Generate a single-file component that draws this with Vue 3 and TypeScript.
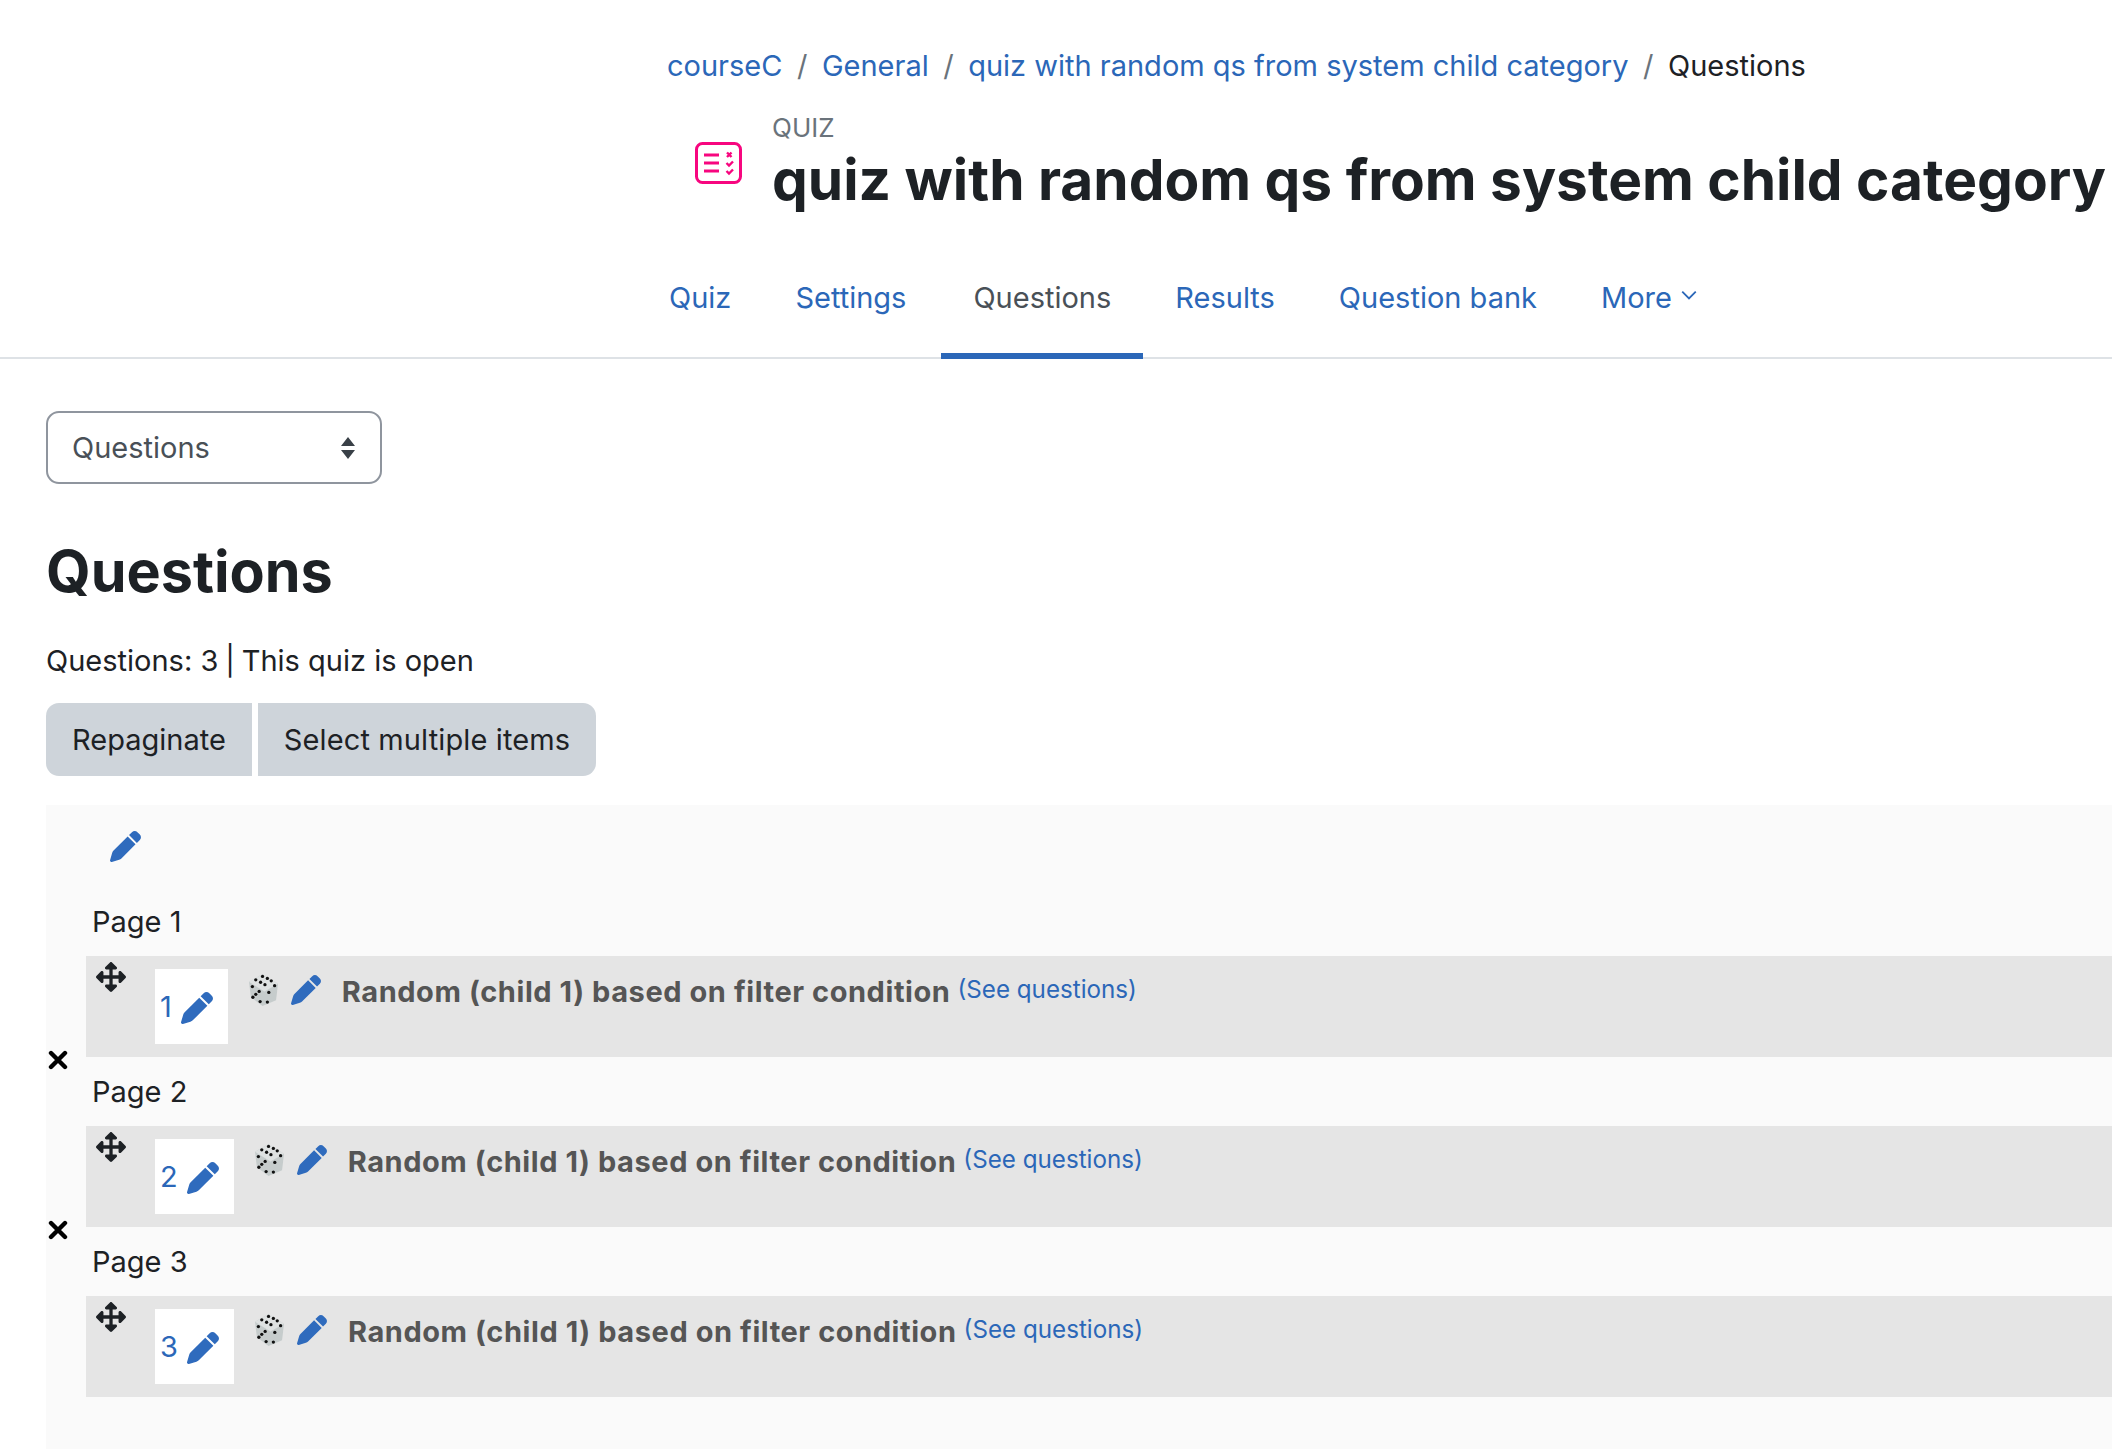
<script setup lang="ts">
const pen = 'M362.7 19.3L314.3 67.7 444.3 197.7l48.4-48.4c25-25 25-65.5 0-90.5L453.3 19.3c-25-25-65.5-25-90.5 0zm-71 71L58.6 323.5c-10.4 10.4-18 23.3-22.2 37.4L1 481.2C-1.5 489.7 .8 498.8 7 505s15.3 8.5 23.7 6.1l120.3-35.4c14.1-4.2 27-11.8 37.4-22.2L421.7 220.3 291.7 90.3z'
const move = 'M352.201 425.775l-79.196 79.196c-9.373 9.373-24.568 9.373-33.941 0l-79.196-79.196c-15.119-15.119-4.411-40.971 16.971-40.97h51.162L228 284H127.196v51.162c0 21.382-25.851 32.09-40.971 16.971L7.029 272.937c-9.373-9.373-9.373-24.569 0-33.941L86.225 159.8c15.119-15.119 40.971-4.411 40.971 16.971V228H228V127.196h-51.23c-21.382 0-32.09-25.851-16.971-40.971l79.196-79.196c9.373-9.373 24.568-9.373 33.941 0l79.196 79.196c15.119 15.119 4.411 40.971-16.971 40.971h-51.162V228h100.804v-51.162c0-21.382 25.851-32.09 40.97-16.971l79.196 79.196c9.373 9.373 9.373 24.569 0 33.941L425.773 352.2c-15.119 15.119-40.971 4.411-40.97-16.971V284H284v100.804h51.23c21.382 0 32.09 25.851 16.971 40.971z'
const crumbs = ['courseC', 'General', 'quiz with random qs from system child category']
const tabs = ['Quiz', 'Settings', 'Questions', 'Results', 'Question bank']
const slots = [1, 2, 3]
const dieDots: [number, number][] = [
  [14, 2.5], [19, 4.5], [23, 7], [7, 6], [12, 8.5], [16.5, 11],
  [3.5, 13], [10.5, 18], [4, 24], [11.5, 28.5], [7, 21],
  [26.5, 12], [20.5, 19], [19, 29],
]
</script>

<template>
  <div class="page">
    <header class="head">
      <nav class="crumbs">
        <template v-for="c in crumbs" :key="c">
          <a class="link">{{ c }}</a><span class="sep">/</span>
        </template>
        <span>Questions</span>
      </nav>
      <div class="title-row">
        <svg class="quiz-icon" viewBox="0 0 47 42" fill="none" stroke="#f7067f">
          <rect x="1.500" y="1.500" width="44" height="39" rx="6" stroke-width="3" />
          <path d="M9 13h15M9 21h15M9 29h15" stroke-width="3" />
          <path d="M32 10.500l4.500 4.500M36.500 10.500l-4.500 4.500" stroke-width="2.400" />
          <path d="M31.500 21l2.500 2.500 4-4M31.500 29l2.500 2.500 4-4" stroke-width="2.400" />
        </svg>
        <div class="title-text">
          <div class="eyebrow">QUIZ</div>
          <h1>quiz with random qs from system child category</h1>
        </div>
      </div>
      <div class="tabs">
        <a v-for="t in tabs" :key="t" class="tab" :class="{ active: t === 'Questions' }">{{ t }}</a>
        <a class="tab more">More
          <svg viewBox="0 0 16 16" class="caret" fill="none" stroke="currentColor" stroke-width="1.6"><path d="M2 5l6 6 6-6" /></svg>
        </a>
      </div>
    </header>

    <main class="main">
      <div class="select">
        <span>Questions</span>
        <svg class="updown" viewBox="0 0 16 24" fill="#394047"><path d="M8 1l7 9H1zM8 23l-7-9h14z" /></svg>
      </div>
      <h2>Questions</h2>
      <p class="status">Questions: 3 <span class="bar">|</span> This quiz is open</p>
      <div class="buttons">
        <button class="btn first">Repaginate</button>
        <button class="btn last">Select multiple items</button>
      </div>

      <section class="panel">
        <svg class="pen top-pen" viewBox="0 0 512 512"><path :d="pen" /></svg>
        <div v-for="n in slots" :key="n" class="slot">
          <div class="page-label">Page {{ n }}</div>
          <div class="row">
            <svg class="move" viewBox="0 0 512 512"><path :d="move" /></svg>
            <div class="num">
              <a class="link">{{ n }}</a>
              <svg class="pen" viewBox="0 0 512 512"><path :d="pen" /></svg>
            </div>
            <svg class="die" viewBox="0 0 30 33">
              <path d="M14 0l16 10-2 17-14 6-12-9L0 8z" fill="#c6cccc" />
              <path d="M14 0l16 10-14 8L0 8z" fill="#dfe2e2" />
              <circle v-for="(d, i) in dieDots" :key="i" :cx="d[0]" :cy="d[1]" r="1.700" fill="#111" />
            </svg>
            <svg class="pen inline-pen" viewBox="0 0 512 512"><path :d="pen" /></svg>
            <span class="q-title">Random (child 1) based on filter condition</span>
            <a class="link see">(See questions)</a>
          </div>
          <svg v-if="n < 3" class="close" viewBox="0 0 20 20" stroke="#000" stroke-width="4.400" stroke-linecap="round"><path d="M3 3l14 14M17 3L3 17" /></svg>
        </div>
      </section>
    </main>
  </div>
</template>

<style>
html, body { margin: 0; background: #fff; }
</style>

<style scoped>
.page {
  width: 2112px;
  height: 1456px;
  overflow: hidden;
  font-family: Inter, "Liberation Sans", sans-serif;
  font-size: 29px;
  line-height: 45px;
  color: #1d2125;
  background: #fff;
}
.link { color: #2b67b8; }
.crumbs {
  display: flex;
  padding: 43px 0 0 667px;
  height: 45px;
}
.sep { color: #6a737b; margin: 0 14.500px; }
.title-row {
  display: flex;
  align-items: flex-start;
  margin-top: 16px;
  padding-left: 695px;
  height: 125px;
}
.quiz-icon { width: 47px; height: 42px; margin-top: 38px; flex: none; }
.title-text { margin-left: 30px; white-space: nowrap; }
.eyebrow { font-size: 26px; line-height: 39px; color: #6a737b; padding-top: 4px; }
h1 {
  margin: -3px 0 0;
  font-size: 56.800px;
  line-height: 72px;
  font-weight: 700;
}
.tabs {
  display: flex;
  margin-top: 33px;
  padding-left: 637px;
  height: 95px;
  border-bottom: 2px solid #dee2e6;
}
.tab {
  box-sizing: border-box;
  height: 97px;
  padding: 13px 32px 0;
  color: #2b67b8;
  white-space: nowrap;
}
.tab:nth-child(2) { padding-right: 35px; }
.tab.active {
  color: #495057;
  border-bottom: 6px solid #2b67b8;
}
.more { display: flex; gap: 8px; align-items: flex-start; }
.caret { width: 18px; height: 18px; margin-top: 11px; }
.main { padding: 52px 0 0 46px; }
.select {
  box-sizing: border-box;
  width: 336px;
  height: 73px;
  border: 2px solid #8f959e;
  border-radius: 13px;
  padding: 0 24px;
  display: flex;
  align-items: center;
  justify-content: space-between;
  color: #495057;
}
.updown { width: 16px; height: 24px; }
h2 {
  margin: 54px 0 0;
  font-size: 57.500px;
  line-height: 67px;
  font-weight: 700;
}
.status { margin: 33px 0 0; }
.bar { margin: 0 -1.300px; }
.buttons { display: flex; gap: 6px; margin-top: 20px; }
.btn {
  font: inherit;
  height: 73px;
  padding: 0 26px;
  border: 0;
  background: #ced4da;
  color: #1d2125;
}
.first { border-radius: 13px 0 0 13px; }
.last { border-radius: 0 13px 13px 0; letter-spacing: .12px; }
.panel {
  margin-top: 29px;
  height: 644px;
  background: #fafafa;
  padding-top: 26px;
  box-sizing: border-box;
}
.pen { width: 31px; height: 31px; fill: #2f6bbd; display: block; flex: none; }
.top-pen { margin-left: 64px; margin-bottom: 25px; }
.slot { position: relative; height: 170px; }
.page-label { box-sizing: border-box; padding: 12px 0 0 46px; height: 69px; }
.row {
  display: flex;
  align-items: flex-start;
  margin-left: 40px;
  height: 101px;
  background: #e5e5e5;
  white-space: nowrap;
}
.move { width: 30px; height: 30px; fill: #1d2125; margin: 6px 0 0 10px; flex: none; }
.num {
  display: flex;
  align-items: center;
  height: 75px;
  margin: 13px 0 0 29px;
  padding: 0 15px 0 5px;
  gap: 9.500px;
  background: #fff;
}
.num .pen { width: 32px; height: 32px; margin-top: 2px; }
.die { width: 29px; height: 32px; margin: 18px 0 0 21px; flex: none; }
.inline-pen { width: 30px; height: 30px; margin: 19px 0 0 13px; }
.q-title { font-weight: 700; letter-spacing: .56px; color: #555; margin: 13px 0 0 20.500px; }
.see { font-size: 24.200px; margin: 11px 0 0 7px; }
.close { position: absolute; left: 2px; top: 163px; width: 20px; height: 20px; }
</style>
